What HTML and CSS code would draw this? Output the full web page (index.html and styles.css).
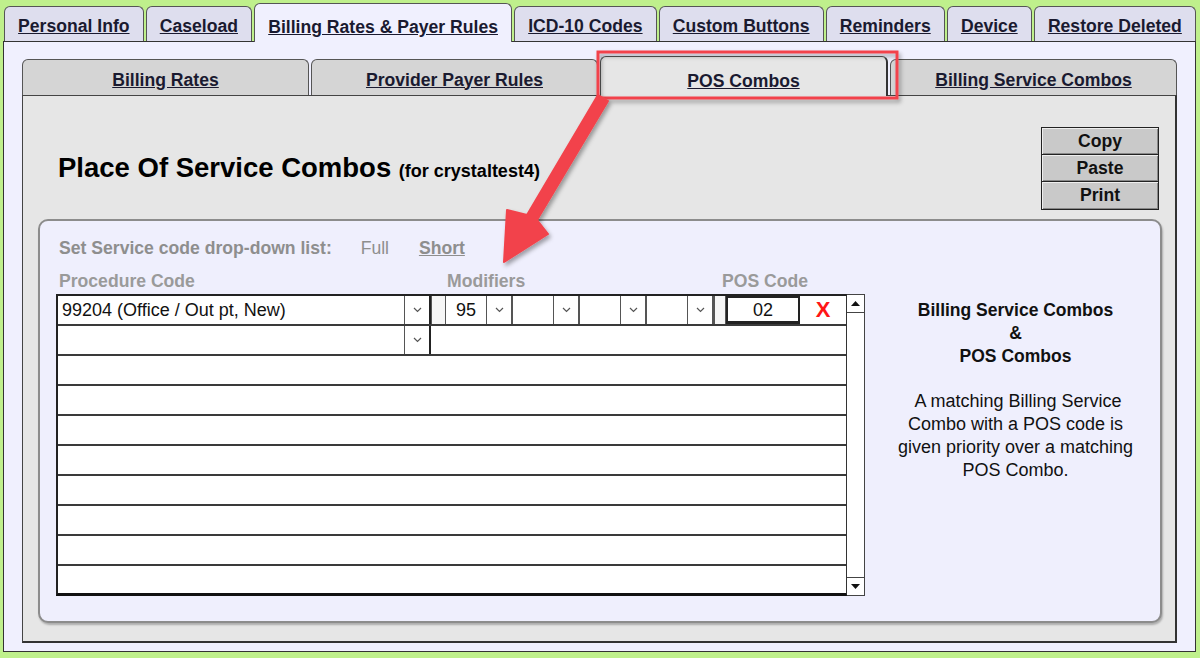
FILE: index.html
```html
<!DOCTYPE html>
<html lang="en">
<head>
  <meta charset="UTF-8" />
  <title>POS Combos</title>
  <link rel="stylesheet" href="styles.css">
</head>
<body>
  <div class="app">
    <!-- Main tabs -->
    <div class="tabs">
      <div class="tab">Personal Info</div>
      <div class="tab">Caseload</div>
      <div class="tab active">Billing Rates &amp; Payer Rules</div>
      <div class="tab">ICD-10 Codes</div>
      <div class="tab">Custom Buttons</div>
      <div class="tab">Reminders</div>
      <div class="tab">Device</div>
      <div class="tab">Restore Deleted</div>
    </div>

    <div class="panel">
      <!-- Sub tabs -->
      <div class="subtabs">
        <div class="subtab">Billing Rates</div>
        <div class="subtab">Provider Payer Rules</div>
        <div class="subtab active">POS Combos</div>
        <div class="subtab">Billing Service Combos</div>
      </div>

      <div class="pane">
        <div class="pane-head">
          <h1>Place Of Service Combos <small>(for crystaltest4)</small></h1>
          <div class="actions">
            <button class="act">Copy</button>
            <button class="act">Paste</button>
            <button class="act">Print</button>
          </div>
        </div>

        <div class="combo-box">
          <div class="form">
            <div class="list-type">
              Set Service code drop-down list:
              <span class="opt">Full</span>
              <span class="opt link">Short</span>
            </div>
            <div class="labels">
              <span class="lbl-proc">Procedure Code</span>
              <span class="lbl-mod">Modifiers</span>
              <span>POS Code</span>
            </div>

            <div class="grid">
              <div class="rows">
                <div class="row">
                  <div class="sel">
                    <div class="val">99204 (Office / Out pt, New)</div>
                    <div class="arr"><svg width="9" height="6" viewBox="0 0 9 6"><polyline points="1,1 4.5,4.5 8,1" fill="none" stroke="#555" stroke-width="1.2"/></svg></div>
                  </div>
                  <div class="spacer"></div>
                  <div class="mod">
                    <div class="val">95</div>
                    <div class="arr"><svg width="9" height="6" viewBox="0 0 9 6"><polyline points="1,1 4.5,4.5 8,1" fill="none" stroke="#555" stroke-width="1.2"/></svg></div>
                  </div>
                  <div class="mod">
                    <div class="val"></div>
                    <div class="arr"><svg width="9" height="6" viewBox="0 0 9 6"><polyline points="1,1 4.5,4.5 8,1" fill="none" stroke="#555" stroke-width="1.2"/></svg></div>
                  </div>
                  <div class="mod">
                    <div class="val"></div>
                    <div class="arr"><svg width="9" height="6" viewBox="0 0 9 6"><polyline points="1,1 4.5,4.5 8,1" fill="none" stroke="#555" stroke-width="1.2"/></svg></div>
                  </div>
                  <div class="mod">
                    <div class="val"></div>
                    <div class="arr"><svg width="9" height="6" viewBox="0 0 9 6"><polyline points="1,1 4.5,4.5 8,1" fill="none" stroke="#555" stroke-width="1.2"/></svg></div>
                  </div>
                  <div class="spacer small"></div>
                  <div class="pos">02</div>
                  <div class="del">X</div>
                </div>
                <div class="row">
                  <div class="sel">
                    <div class="val"></div>
                    <div class="arr"><svg width="9" height="6" viewBox="0 0 9 6"><polyline points="1,1 4.5,4.5 8,1" fill="none" stroke="#555" stroke-width="1.2"/></svg></div>
                  </div>
                </div>
                <div class="row"></div>
                <div class="row"></div>
                <div class="row"></div>
                <div class="row"></div>
                <div class="row"></div>
                <div class="row"></div>
                <div class="row"></div>
                <div class="row"></div>
              </div>
              <div class="scroll">
                <div class="sbtn"><svg width="9" height="5" viewBox="0 0 9 5"><polygon points="0,5 4.5,0 9,5" fill="#111"/></svg></div>
                <div class="track"></div>
                <div class="sbtn"><svg width="9" height="5" viewBox="0 0 9 5"><polygon points="0,0 4.5,5 9,0" fill="#111"/></svg></div>
              </div>
            </div>
          </div>

          <div class="info">
            <div class="info-title">Billing Service Combos<br>&amp;<br>POS Combos</div>
            <p>&nbsp;A matching Billing Service<br>Combo with a POS code is<br>given priority over a matching<br>POS Combo.</p>
          </div>
        </div>
      </div>
    </div>

    <!-- Annotation overlay -->
    <svg class="note" width="1200" height="658" viewBox="0 0 1200 658">
      <defs>
        <filter id="sh" x="-20%" y="-20%" width="140%" height="140%">
          <feDropShadow dx="2" dy="3" stdDeviation="2" flood-color="#000" flood-opacity="0.35"/>
        </filter>
      </defs>
      <rect x="598" y="52" width="299" height="46" fill="none" stroke="#f2434b" stroke-width="3" filter="url(#sh)"/>
      <polygon points="598,95 608,101 537,220 548,234 504,262 507,210 527,215" fill="#f2434b" stroke="#f2434b" stroke-width="2" stroke-linejoin="round" filter="url(#sh)"/>
    </svg>
  </div>
</body>
</html>
```

FILE: styles.css
```css
* { box-sizing: border-box; }
body {
  margin: 0;
  font-family: "Liberation Sans", Arial, sans-serif;
  background: #bff08c;
  color: #111;
}

.app {
  position: relative;
  width: 1200px;
  height: 658px;
  padding: 3px 4px 6px 3px;
  display: flex;
  flex-direction: column;
}

/* Main tabs */
.tabs {
  display: flex;
  align-items: flex-end;
  gap: 2px;
  height: 38px;
  padding-left: 1px;
}

.tab {
  flex-grow: 1;
  height: 35px;
  padding: 5px 12px 0;
  display: flex;
  align-items: center;
  justify-content: center;
  background: #dedeee;
  border: 1px solid #555;
  border-bottom: none;
  border-radius: 6px 6px 0 0;
  font-size: 17.6px;
  font-weight: bold;
  color: #1a1a30;
  text-decoration: underline;
  white-space: nowrap;
}

.tab.active {
  height: 39px;
  padding-top: 9px;
  margin-bottom: -1px;
  background: #f0f0fe;
  position: relative;
  z-index: 1;
}

.panel {
  flex: 1;
  display: flex;
  flex-direction: column;
  background: #f0f0fe;
  border: 1px solid #333;
  padding: 14px 18px 8px 18px;
}

/* Sub tabs */
.subtabs {
  display: flex;
  align-items: flex-end;
  gap: 2px;
  height: 39px;
}

.subtab {
  flex: 1;
  height: 36px;
  padding-top: 5px;
  display: flex;
  align-items: center;
  justify-content: center;
  background: #d5d5d5;
  border: 1px solid #555;
  border-bottom: none;
  border-radius: 6px 6px 0 0;
  font-size: 17.6px;
  font-weight: bold;
  color: #1a1a30;
  text-decoration: underline;
}

.subtab.active {
  height: 40px;
  padding-top: 9px;
  margin-bottom: -1px;
  background: #e6e6e6;
  border-right: 2px solid #333;
  position: relative;
  z-index: 1;
}

.pane {
  flex: 1;
  display: flex;
  flex-direction: column;
  background: #e6e6e6;
  border: 1px solid #444;
  border-right: 2px solid #333;
  border-bottom: 2px solid #333;
  padding: 0 13px 18px 15px;
}

.pane-head {
  height: 123px;
  display: flex;
  justify-content: space-between;
  align-items: flex-start;
}

h1 {
  margin: 56px 0 0 20px;
  font-size: 27.5px;
  line-height: 32px;
  color: #000;
}

h1 small {
  font-size: 18px;
}

.actions {
  margin: 31px 3px 0 0;
  width: 118px;
  display: flex;
  flex-direction: column;
  border: 1px solid #222;
}

.act {
  height: 27px;
  margin: 0;
  padding: 0;
  background: #c9c9c9;
  border: none;
  border-bottom: 1px solid #222;
  box-shadow: inset 1px 1px 0 #eee, inset -1px -1px 0 #888;
  font-family: inherit;
  font-size: 17.6px;
  font-weight: bold;
  color: #111;
}

.act:last-child { border-bottom: none; }

/* POS combo box */
.combo-box {
  height: 404px;
  display: flex;
  background: #efeffd;
  border: 2px solid #8c8c8c;
  border-radius: 10px;
  box-shadow: 1px 2px 2px rgba(0, 0, 0, 0.25);
  padding: 16px 0 0 16px;
}

.form {
  width: 809px;
}

.list-type {
  font-size: 17.6px;
  line-height: 22px;
  font-weight: bold;
  color: #8e8e8e;
  padding-left: 3px;
}

.opt {
  font-weight: normal;
  margin-left: 24px;
}

.opt.link {
  font-weight: bold;
  margin-left: 25px;
  text-decoration: underline;
}

.labels {
  margin-top: 11px;
  display: flex;
  font-size: 17.6px;
  line-height: 22px;
  font-weight: bold;
  color: #9a9a9a;
  padding-left: 3px;
}

.lbl-proc { width: 388px; }
.lbl-mod { width: 275px; }

.grid {
  margin-top: 2px;
  display: flex;
}

.rows {
  width: 791px;
  background: #fff;
  border: 2px solid #222;
  border-right: 1px solid #333;
  border-bottom: 3px solid #111;
}

.row {
  height: 30px;
  display: flex;
  border-bottom: 2px solid #3a3a3a;
}

.row:last-child {
  height: 27px;
  border-bottom: none;
}

.sel {
  width: 373px;
  display: flex;
  border-right: 2px solid #222;
}

.val {
  flex: 1;
  padding-left: 4px;
  font-size: 18px;
  line-height: 28px;
  white-space: nowrap;
}

.arr {
  width: 25px;
  display: flex;
  align-items: center;
  justify-content: center;
  border-left: 1px solid #555;
}

.spacer {
  width: 15px;
  border-right: 1px solid #555;
  box-shadow: inset 1px 0 0 #555;
  background: #f6f6f6;
}

.spacer.small {
  width: 12px;
}

.mod {
  width: 67px;
  display: flex;
  border-right: 2px solid #555;
}

.mod .val {
  padding-left: 0;
  text-align: center;
}

.pos {
  width: 74px;
  border: 2px solid #222;
  border-bottom-width: 3px;
  text-align: center;
  font-size: 18px;
  line-height: 24px;
}

.del {
  flex: 1;
  text-align: center;
  color: #ff1616;
  font-size: 22px;
  font-weight: bold;
  line-height: 28px;
}

.scroll {
  width: 18px;
  display: flex;
  flex-direction: column;
  background: #fff;
  border: 1px solid #444;
  border-left: none;
}

.sbtn {
  height: 18px;
  display: flex;
  align-items: center;
  justify-content: center;
}

.sbtn:first-child { border-bottom: 1px solid #444; }
.sbtn:last-child { border-top: 1px solid #444; }

.track { flex: 1; }

.info {
  flex: 1;
  padding-top: 62px;
  padding-left: 6px;
  text-align: center;
  font-size: 18px;
  line-height: 23px;
  color: #111;
}

.info-title {
  font-size: 17.5px;
  font-weight: bold;
}

.info p {
  margin: 22px 0 0;
}

.note {
  position: absolute;
  top: 0;
  left: 0;
  pointer-events: none;
  z-index: 5;
}
```
